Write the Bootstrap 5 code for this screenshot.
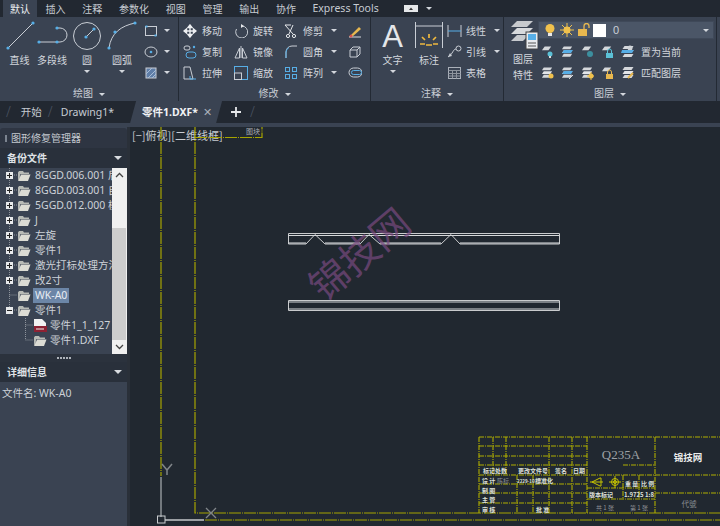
<!DOCTYPE html>
<html lang="zh">
<head>
<meta charset="utf-8">
<title>CAD</title>
<link href="https://cdn.jsdelivr.net/npm/bootstrap@5.3.0/dist/css/bootstrap.min.css" rel="stylesheet">
<style>
html,body{height:526px;width:720px;overflow:hidden;background:#222831}
body{font-family:"Noto Sans CJK SC","Liberation Sans",sans-serif;font-size:10px;color:#d3d7dd;line-height:1}
svg{display:block;flex:none}
.menu{height:17px;background:#222831;padding-left:3px}
.menu span{padding:0 8.4px;line-height:17px;height:17px;color:#c6cbd2;white-space:nowrap}
.menu .on{background:#3a4352;color:#eef0f3;padding:0 7px}
.menu .ex{font-family:"Noto Sans",sans-serif;font-size:10.5px;padding-left:8px}
.menu .tag{margin-left:17px}
.ribbon{height:84px;background:#3a4352}
.grp{border-right:1px solid #232a34;flex:none}
.g1{width:179px}.g2{width:192px}.g3{width:133px}.g4{width:213px}
.body{height:70px;padding-top:4px}
.ttl{height:14px;line-height:14px;text-align:center;color:#c9ced5;font-size:10px;margin-top:-1px}
.car{display:inline-block;border:3px solid transparent;border-top:3px solid #d3d7dd;border-bottom:0;vertical-align:middle;margin-left:6px}
.big{display:flex;flex-direction:column;align-items:center;flex:none;font-size:10px;gap:2px}
.big .car{margin:3px 0 0}
.b1{width:33px;margin-left:3px}.b2{width:32px}.b3{width:38px}.b4{width:32px}.ba{width:43px}.bd{width:30px}
.aa{font-family:"Liberation Sans",sans-serif;font-size:31px;line-height:32px;height:32px;color:#e4e6e9}
.rows{display:grid;grid-auto-rows:21px;flex:none;margin-top:-1px}
.cell{display:flex;align-items:center;white-space:nowrap}
.mod{grid-template-columns:51px 50px 64px 16px;margin-left:4px}
.mod .cell svg{margin-right:4px}
.mod .cell span{margin-left:1px}
.col5{width:28px;margin-left:6px}
.ann{margin-left:3px;width:54px}
.ann .cell svg{margin-right:4px}
.ly{width:30px}
.combo{height:18px;width:176px;background:#4b5667;margin-bottom:3px;padding:0 4px;gap:3px;border:1px solid #3f4959;color:#ccd1d8;font-family:"Liberation Sans",sans-serif;font-size:11px}
.lrow{height:21px;gap:7px;padding-left:3px;margin-top:-1px}
.lrow + .lrow{margin-top:0}
.lrow span{margin-left:-2px;white-space:nowrap}
.tabs{height:22px;background:#222831;padding-left:6px;color:#c6cbd2;font-size:10.5px;font-family:"Noto Sans","Noto Sans CJK SC",sans-serif}
.tabs .t{padding:0 8px;line-height:22px;white-space:nowrap}
.tabs .t.first{padding:0 6px 0 10px}
.tabs .sl{color:#4a5361;font-size:14px;font-weight:300}
.tabs .act{background:#3a4352;color:#f1f2f4;font-weight:700;height:22px;margin-left:8px;padding:0 9px 0 12px;line-height:22px;font-size:10.5px;clip-path:polygon(6px 0,100% 0,calc(100% - 6px) 100%,0 100%);width:92px;white-space:nowrap}
.tabs .act i{font-style:normal;font-weight:400;color:#aab0b9;margin-left:5px;font-size:11px}
.strip{height:4px;background:#3a4352}
.main{height:399px}
.side{width:127px;background:#3a4352;flex:none}
.gap{width:3px;background:#2a3039;flex:none}
.cv{flex:1 1 auto;background:#212830}
.ph{height:20px;background:#2e3542;border-radius:3px 3px 0 0;padding-left:5px;color:#c3c8cf;font-size:10px;gap:4px;margin-top:1px}
.ph b{width:2px;height:7px;background:#7c8490;display:block}
.hh{height:20px;background:#29303b;padding:0 5px 0 7px;font-weight:700;color:#dfe2e6;font-size:10px}
.hh u{width:0;height:0;border:4px solid transparent;border-top:4px solid #d8dbe0;border-bottom:0}
.tree{height:186px}
.list{width:112px;overflow:hidden}
.links{position:absolute;left:0;top:0}
.row-t{height:15px;white-space:nowrap;font-size:10.5px;color:#cdd2d8;font-family:"Noto Sans","Noto Sans CJK SC",sans-serif;gap:4px;padding-left:6px;position:relative}
.row-t.c{padding-left:33px;gap:3px}
.row-t.n{padding-left:17px}
.row-t .sel{background:#6c86a7;color:#e8edf3;padding:0 2px;line-height:15px;margin-left:-2px}
.pm{width:7px;height:7px;flex:none}
.sb{width:15px;background:#f0f0f0;flex:none}
.sb .th{height:112px;background:#cdcdcd;margin:60px 1px 0 0}
.sash{height:8px;background:#2b323d;gap:1px}
.sash i{width:2px;height:2px;background:#aeb3ba;display:block}
.info{padding:6px 2px 0 2px;color:#ccd1d7;font-size:10.5px;font-family:"Noto Sans","Noto Sans CJK SC",sans-serif}
</style>
</head>
<body class="d-flex flex-column m-0">
<svg width="0" height="0" class="position-absolute">
<defs>
<symbol id="folder" viewBox="0 0 14 12"><path d="M1 2.500 L1 10.500 L3 10.500 L3 2.500 Z" fill="#9a9f9f"/><path d="M1 2.500 L2 1 L6 1 L7 2.500 L12 2.500 L12 4 L3.500 4 L1 10 Z" fill="#b7bab5"/><path d="M4 4.500 L13.500 4.500 L11 11 L1.200 11 Z" fill="#dcdcd4"/></symbol>
<symbol id="plus" viewBox="0 0 7 7"><rect width="7" height="7" fill="#e8eaec"/><path d="M1 3.500H6M3.500 1V6" stroke="#222"/></symbol>
<symbol id="minus" viewBox="0 0 7 7"><rect width="7" height="7" fill="#e8eaec"/><path d="M1 3.500H6" stroke="#222"/></symbol>
<symbol id="lp" viewBox="0 0 14 14"><path d="M4 1H11L8 5H1Z" fill="#d5d8dc"/></symbol>
<symbol id="ls" viewBox="0 0 14 14"><path d="M3 1H12L10 4H1Z" fill="#d5d8dc"/><path d="M3 5H12L10 8H1Z" fill="#e3e5e8"/><path d="M3 9H12L10 12H1Z" fill="#d5d8dc"/></symbol>
</defs>
</svg>

<nav class="menu d-flex">
<span class="on">默认</span><span>插入</span><span>注释</span><span>参数化</span><span>视图</span><span>管理</span><span>输出</span><span>协作</span><span class="ex">Express Tools</span>
<span class="tag p-0 d-flex align-items-center gap-1"><svg width="14" height="7"><rect width="14" height="7" fill="#e6e8ea"/><path d="M5 5L7 2.500L9 5Z" fill="#333"/></svg><i class="car m-0 ms-1"></i></span>
</nav>

<section class="ribbon d-flex">
<div class="grp g1 d-flex flex-column">
<div class="body d-flex">
<div class="big b1"><svg width="30" height="32" viewBox="0 0 30 32"><path d="M3 27L28 2" stroke="#c9ced5"/><circle cx="3" cy="27" r="1.600" fill="#57aee6"/><circle cx="28" cy="2" r="1.600" fill="#57aee6"/></svg><span>直线</span></div>
<div class="big b2"><svg width="32" height="32" viewBox="0 0 32 32"><path d="M3 21H21M21 7H24A7 7 0 0 1 24 21H21" fill="none" stroke="#c9ced5"/><circle cx="3" cy="21" r="1.600" fill="#57aee6"/><circle cx="21" cy="21" r="1.600" fill="#57aee6"/><circle cx="21" cy="7" r="1.600" fill="#57aee6"/></svg><span>多段线</span></div>
<div class="big b3"><svg width="30" height="32" viewBox="0 0 30 32"><circle cx="15" cy="15" r="13.500" fill="none" stroke="#c9ced5"/><path d="M15 15L22 8" stroke="#c9ced5"/><circle cx="14" cy="16" r="1.600" fill="#57aee6"/><circle cx="22" cy="8" r="1.600" fill="#57aee6"/></svg><span>圆</span><i class="car"></i></div>
<div class="big b4"><svg width="32" height="32" viewBox="0 0 32 32"><path d="M3 27C5 12 15 5 29 2" fill="none" stroke="#c9ced5"/><circle cx="3" cy="27" r="1.600" fill="#57aee6"/><circle cx="9" cy="11" r="1.600" fill="#57aee6"/><circle cx="29" cy="2" r="1.600" fill="#57aee6"/></svg><span>圆弧</span><i class="car"></i></div>
<div class="rows col5">
<div class="cell"><svg width="14" height="12"><rect x="1.500" y="1.500" width="11" height="9" fill="none" stroke="#c9ced5"/><path d="M1.500 1.500h2M12.500 10.500h-2" stroke="#57aee6" stroke-width="2"/></svg><i class="car"></i></div>
<div class="cell"><svg width="14" height="12"><ellipse cx="7" cy="6" rx="6" ry="5" fill="none" stroke="#c9ced5"/><circle cx="7" cy="6" r="1.300" fill="#57aee6"/></svg><i class="car"></i></div>
<div class="cell"><svg width="14" height="14"><rect x="2" y="2" width="10" height="10" fill="#5f7ea8" stroke="#c9ced5"/><path d="M2 8L8 2M4 12L12 4M8 12L12 8" stroke="#a9bdd6"/></svg><i class="car"></i></div>
</div>
</div>
<div class="ttl">绘图<i class="car"></i></div>
</div>

<div class="grp g2 d-flex flex-column">
<div class="body d-flex">
<div class="rows mod">
<div class="cell"><svg width="14" height="14"><path d="M7 1V13M1 7H13M7 1L5 3.500H9ZM7 13L5 10.500H9ZM1 7L3.500 5V9ZM13 7L10.500 5V9Z" stroke="#eceef1" fill="#eceef1" stroke-width="1.400"/></svg><span>移动</span></div>
<div class="cell"><svg width="14" height="14"><path d="M8 2A6 6 0 1 1 2.500 5" fill="none" stroke="#c9ced5"/><path d="M7 0V4L10 2Z" fill="#e7e9ec"/></svg><span>旋转</span></div>
<div class="cell"><svg width="14" height="14"><path d="M1 1H7M1 1L9 10M9 1L5 10" stroke="#e7e9ec" fill="none"/><circle cx="4" cy="12" r="1.600" fill="none" stroke="#e7e9ec"/><circle cx="10" cy="12" r="1.600" fill="none" stroke="#e7e9ec"/></svg><span>修剪</span><i class="car ms-2"></i></div>
<div class="cell"><svg width="14" height="14"><path d="M2 12L11 3L13 5L4 13L1 13Z" fill="#e8b84f"/><path d="M1 13H13" stroke="#d8dbe0"/><circle cx="3" cy="12" r="1.500" fill="#d9534f"/></svg></div>

<div class="cell"><svg width="14" height="14"><rect x="1" y="1" width="6" height="4" rx="2" fill="none" stroke="#c9ced5"/><circle cx="11" cy="2" r="1.200" fill="#57aee6"/><rect x="3" y="7" width="10" height="6" rx="3" fill="none" stroke="#57aee6"/></svg><span>复制</span></div>
<div class="cell"><svg width="14" height="14"><path d="M7 1V13M5.500 3L1 13H5.500ZM8.500 3L13 13H8.500Z" fill="none" stroke="#c9ced5"/></svg><span>镜像</span></div>
<div class="cell"><svg width="14" height="14"><path d="M2 13V7A6 6 0 0 1 8 1H13" fill="none" stroke="#c9ced5"/><path d="M2 13V7A6 6 0 0 1 5 2.500" fill="none" stroke="#57aee6"/></svg><span>圆角</span><i class="car ms-2"></i></div>
<div class="cell"><svg width="14" height="14"><path d="M2 5H9V12H2ZM2 5L5 2H12V9L9 12M9 5L12 2" fill="none" stroke="#c9ced5"/></svg></div>

<div class="cell"><svg width="14" height="14"><path d="M1 1H7L10 13H1Z" fill="none" stroke="#c9ced5"/><path d="M7 10V13H13" stroke="#57aee6" fill="none"/></svg><span>拉伸</span></div>
<div class="cell"><svg width="14" height="14"><rect x=".5" y=".5" width="13" height="13" fill="none" stroke="#57aee6"/><rect x=".5" y="7" width="7" height="6.500" fill="none" stroke="#c9ced5"/></svg><span>缩放</span></div>
<div class="cell"><svg width="14" height="14"><g fill="none" stroke="#57aee6"><rect x="1.500" y="1.500" width="4" height="4"/><rect x="8.500" y="1.500" width="4" height="4"/><rect x="1.500" y="8.500" width="4" height="4"/><rect x="8.500" y="8.500" width="4" height="4"/></g></svg><span>阵列</span><i class="car ms-2"></i></div>
<div class="cell"><svg width="14" height="14"><rect x="1" y="2" width="13" height="9" rx="4.500" fill="none" stroke="#c9ced5"/><rect x="3.500" y="4.500" width="10" height="4" rx="2" fill="none" stroke="#57aee6"/></svg></div>
</div>
</div>
<div class="ttl">修改<i class="car"></i></div>
</div>

<div class="grp g3 d-flex flex-column">
<div class="body d-flex">
<div class="big ba"><span class="aa">A</span><span>文字</span><i class="car"></i></div>
<div class="big bd"><svg width="30" height="32" viewBox="0 0 30 32"><path d="M1.500 1V27M28.500 1V27M2 5H28" fill="none" stroke="#c9ced5"/><path d="M15 13V17M8 16L11 19M22 16L19 19M6 23H11M19 23H24M12 24H18" stroke="#f0b93f" stroke-width="1.700"/></svg><span>标注</span></div>
<div class="rows ann">
<div class="cell"><svg width="15" height="14"><path d="M1 1V13M14 1V13" stroke="#c9ced5"/><path d="M1 7H14" stroke="#57aee6"/></svg><span>线性</span><i class="car ms-2"></i></div>
<div class="cell"><svg width="15" height="14"><circle cx="11.500" cy="3.500" r="2.500" fill="none" stroke="#c9ced5"/><path d="M9 4C6 4 6 9 1 12" fill="none" stroke="#c9ced5"/><path d="M1 12L3 8L5 11Z" fill="#c9ced5"/></svg><span>引线</span><i class="car ms-2"></i></div>
<div class="cell"><svg width="15" height="14"><rect x="1.500" y="1.500" width="12" height="11" fill="none" stroke="#aab0b9"/><path d="M1.500 4.500H13.500M1.500 7.500H13.500M1.500 10H13.500M5.500 4.500V12.500M9.500 4.500V12.500" stroke="#8e949e"/></svg><span>表格</span></div>
</div>
</div>
<div class="ttl">注释<i class="car"></i></div>
</div>

<div class="grp g4 d-flex flex-column">
<div class="body d-flex">
<div class="big ly ms-1"><svg width="29" height="31" viewBox="0 0 29 31"><path d="M8 0H24L18 6H2Z" fill="#c7cace"/><path d="M8 7H24L18 13H2Z" fill="#d8dadd"/><path d="M8 14H20L14 20H2Z" fill="#c7cace"/><rect x="17" y="11" width="12" height="17" fill="#e9ebee" stroke="#444"/><rect x="19" y="13" width="8" height="6" fill="#57aee6"/><path d="M19 22H27M19 25H27" stroke="#555"/></svg><span>图层</span><span class="mt-1">特性</span></div>
<div class="d-flex flex-column">
<div class="combo d-flex align-items-center"><svg width="14" height="14"><circle cx="7" cy="5.500" r="4.500" fill="#f0c14d"/><rect x="5" y="10" width="4" height="3" fill="#e8e8e8"/></svg><svg width="14" height="14"><circle cx="7" cy="7" r="3.500" fill="#f0c14d"/><path d="M7 0V14M0 7H14M2 2L12 12M12 2L2 12" stroke="#f0c14d"/></svg><svg width="13" height="14"><rect x="1" y="6" width="9" height="7" fill="#e8b84f"/><path d="M7 6V3A2.500 2.500 0 0 1 12 3V5" fill="none" stroke="#e8b84f" stroke-width="1.300"/></svg><svg width="13" height="13"><rect width="13" height="13" fill="#fff"/></svg><span class="ms-1 flex-grow-1">0</span><i class="car"></i></div>
<div class="lrow d-flex align-items-center"><svg width="13" height="14"><use href="#lp"/><circle cx="9" cy="9" r="2.500" fill="#5bc0d6"/><rect x="8" y="11" width="2" height="2" fill="#ddd"/></svg><svg width="13" height="14"><use href="#ls"/><path d="M3 5H12L10 8H1Z" fill="#57aee6"/></svg><svg width="13" height="14"><use href="#lp"/><circle cx="9" cy="9" r="3" fill="#3c8f9f"/></svg><svg width="13" height="14"><use href="#lp"/><rect x="5" y="8" width="7" height="5" fill="#5bc0d6"/><path d="M6.500 8V6A2 2 0 0 1 10.500 6V8" fill="none" stroke="#5bc0d6"/></svg><svg width="15" height="14"><use href="#ls"/><circle cx="9" cy="3" r="2.500" fill="#cfd3d8"/><path d="M1 5H13L11 8H0Z" fill="#57aee6"/></svg><span>置为当前</span></div>
<div class="lrow d-flex align-items-center"><svg width="13" height="14"><use href="#ls"/><circle cx="10" cy="10" r="2.500" fill="#f0c14d"/></svg><svg width="13" height="14"><use href="#ls"/><path d="M3 5H12L10 8H1Z" fill="#57aee6"/><path d="M8 13L12 9" stroke="#ddd"/></svg><svg width="13" height="14"><use href="#ls"/><circle cx="10" cy="10" r="2.500" fill="#f0c14d"/><path d="M10 6V14M6 10H14" stroke="#f0c14d"/></svg><svg width="13" height="14"><use href="#lp"/><rect x="5" y="8" width="7" height="5" fill="#e8b84f"/><path d="M6.500 8V6A2 2 0 0 1 10.500 6V8" fill="none" stroke="#e8b84f"/></svg><svg width="15" height="14"><use href="#ls"/><path d="M7 12L12 7" stroke="#e8b84f" stroke-width="2"/></svg><span>匹配图层</span></div>
</div>
</div>
<div class="ttl">图层<i class="car"></i></div>
</div>
</section>

<div class="tabs d-flex align-items-center">
<span class="sl">/</span><span class="t first">开始</span><span class="sl">/</span><span class="t">Drawing1*</span>
<div class="act">零件1.DXF*<i>✕</i></div>
<svg class="ms-2" width="12" height="12"><path d="M6 1V11M1 6H11" stroke="#e6e8ea" stroke-width="1.800"/></svg><span class="sl ms-2">/</span>
</div>
<div class="strip"></div>

<main class="main d-flex">
<aside class="side d-flex flex-column">
<div class="ph d-flex align-items-center"><b></b><span>图形修复管理器</span></div>
<div class="hh d-flex align-items-center justify-content-between"><span>备份文件</span><u></u></div>
<div class="tree d-flex">
<div class="list position-relative">
<svg class="links" width="112" height="186" fill="none" stroke="#8d939b" stroke-dasharray="1 1"><path d="M9.500 0V143M9.500 127H17M25.500 150V172M25.500 157H33M25.500 172H33M12 7H17M12 22H17M12 37H17M12 52H17M12 67H17M12 82H17M12 97H17M12 112H17M12 142H17"/></svg>
<div class="row-t d-flex align-items-center"><svg class="pm"><use href="#plus"/></svg><svg width="14" height="12"><use href="#folder"/></svg><span>8GGD.006.001 后</span></div>
<div class="row-t d-flex align-items-center"><svg class="pm"><use href="#plus"/></svg><svg width="14" height="12"><use href="#folder"/></svg><span>8GGD.003.001 自</span></div>
<div class="row-t d-flex align-items-center"><svg class="pm"><use href="#plus"/></svg><svg width="14" height="12"><use href="#folder"/></svg><span>5GGD.012.000 模</span></div>
<div class="row-t d-flex align-items-center"><svg class="pm"><use href="#plus"/></svg><svg width="14" height="12"><use href="#folder"/></svg><span>J</span></div>
<div class="row-t d-flex align-items-center"><svg class="pm"><use href="#plus"/></svg><svg width="14" height="12"><use href="#folder"/></svg><span>左旋</span></div>
<div class="row-t d-flex align-items-center"><svg class="pm"><use href="#plus"/></svg><svg width="14" height="12"><use href="#folder"/></svg><span>零件1</span></div>
<div class="row-t d-flex align-items-center"><svg class="pm"><use href="#plus"/></svg><svg width="14" height="12"><use href="#folder"/></svg><span>激光打标处理方法</span></div>
<div class="row-t d-flex align-items-center"><svg class="pm"><use href="#plus"/></svg><svg width="14" height="12"><use href="#folder"/></svg><span>改2寸</span></div>
<div class="row-t n d-flex align-items-center"><svg width="14" height="12"><use href="#folder"/></svg><span class="sel">WK-A0</span></div>
<div class="row-t d-flex align-items-center"><svg class="pm"><use href="#minus"/></svg><svg width="14" height="12"><use href="#folder"/></svg><span>零件1</span></div>
<div class="row-t c d-flex align-items-center"><svg width="14" height="14"><path d="M1 0H9L13 4V13H1Z" fill="#f2f2f2"/><rect x="1" y="7" width="13" height="6" fill="#8d2233"/><path d="M3 10H11" stroke="#eee"/></svg><span>零件1_1_127</span></div>
<div class="row-t c d-flex align-items-center"><svg width="14" height="12"><use href="#folder"/></svg><span>零件1.DXF</span></div>
</div>
<div class="sb position-relative"><div class="th"></div>
<svg class="position-absolute top-0 start-0" width="15" height="186"><path d="M4 9L7.500 5.500L11 9M4 177L7.500 180.500L11 177" fill="none" stroke="#444" stroke-width="1.300"/></svg>
</div>
</div>
<div class="sash d-flex align-items-center justify-content-center"><i></i><i></i><i></i><i></i><i></i></div>
<div class="hh d-flex align-items-center justify-content-between"><span>详细信息</span><u></u></div>
<div class="info">文件名: WK-A0</div>
</aside>
<div class="gap"></div>
<div class="cv">
<svg width="590" height="399" viewBox="130 127 590 399" font-family="Noto Sans CJK SC, sans-serif">
<text x="132" y="140" font-size="11" fill="#c8ccd2">[−]俯视][二维线框]</text>
<g fill="none" stroke="#a6a400" stroke-width="1.200" stroke-dasharray="12 1 1 1">
<path d="M161 127V476"/><path d="M195 127V513H720"/><path d="M195 137.500H262V127"/><path d="M205 520H720"/>
</g>
<text x="246" y="134" font-size="7" fill="#a9adb3">图块</text>
<path d="M161 477V517" stroke="#8f9499" stroke-width="1.500"/>
<path d="M165 520H204" stroke="#c4c7ca" stroke-width="1.300"/>
<rect x="157.500" y="516" width="7.500" height="7" fill="none" stroke="#c8cbce"/>
<path d="M162 464L167 470L172 464M167 470V475" fill="none" stroke="#808589" stroke-width="1.500"/>
<path d="M206 508L216 518M216 508L206 518" stroke="#808589" stroke-width="1.300"/>

<g fill="none" stroke="#c9cbcd">
<path d="M288.500 244V233.500H559.500V244H460L451 234.500L441 244H380L369 234.500L360 244H325L315 234.500L306 244H288.500Z"/>
<path d="M288.500 235.500H559.500" stroke="#d6d8da"/><path d="M288.500 243H306M325 243H360M380 243H441M460 243H559.500" stroke="#e0e2e4"/>
<path d="M288.500 300.500H559.500V310.500H288.500Z"/><path d="M288.500 302H559.500M288.500 309H559.500" stroke="#d6d8da"/>
</g>

<g fill="none" stroke="#b0ae00" stroke-width="1.100" stroke-dasharray="5 1 1 1">
<path d="M479 437H720M479 446H587M479 456H587M479 465H587M479 475H720M479 484H587M479 493H587M479 503H587"/>
<path d="M587 488H655M587 499H655M623 465H655M655 493H720"/>
<path d="M479 437V513M493 437V475M506 437V475M517 475V513M533 475V513M549 437V513M572 437V513M587 437V513M623 475V499M639 475V499M655 437V513"/>
</g>
<g font-size="6" fill="#dfe0d8" font-weight="700">
<text x="483" y="473">标记</text><text x="495" y="473">处数</text><text x="518" y="473">更改文件号</text><text x="555" y="473">签名</text><text x="573" y="473">日期</text>
<text x="482" y="483">设 计</text><text x="517" y="483" font-size="4.500">2229-10</text><text x="535" y="483">標准化</text>
<text x="482" y="493">制 图</text><text x="482" y="502">主 管</text><text x="482" y="512">审 核</text><text x="536" y="512">批 准</text>
<text x="625" y="486">重 量</text><text x="641" y="486">比 例</text><text x="589" y="497">版本标记</text><text x="624" y="497">1.9725</text><text x="645" y="497">1:8</text>
</g>
<g font-size="6" fill="#8f9296"><text x="497" y="483">陈标</text><text x="596" y="510">共 1 张</text><text x="630" y="510">第 1 张</text></g>
<text x="621" y="459" text-anchor="middle" font-family="Liberation Serif, serif" font-size="13" fill="#9ea1a5">Q235A</text>
<text x="688" y="461" text-anchor="middle" font-size="9.500" font-weight="700" fill="#eceded">锦技网</text>
<text x="689" y="507" text-anchor="middle" font-size="7.500" fill="#898d92">代號</text>
<g fill="none" stroke="#c6c300"><path d="M592 482L600 478H601V486H600ZM590 482H603"/><circle cx="615" cy="482" r="3.500"/><circle cx="615" cy="482" r="1.500"/><path d="M609 482H621M615 476V488"/></g>

<text transform="translate(362 257) rotate(-40)" text-anchor="middle" dominant-baseline="middle" font-size="39" fill="#7a4a80" fill-opacity=".7">锦技网</text>
</svg>
</div>
</main>
</body>
</html>
